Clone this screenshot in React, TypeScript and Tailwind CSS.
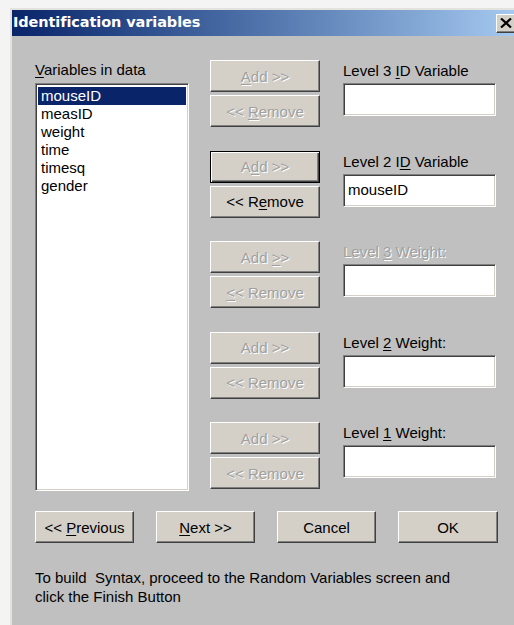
import React from "react";

type BtnProps = {
  children: React.ReactNode;
  disabled?: boolean;
  primary?: boolean;
  className?: string;
};

// classic raised 3D push button
const Win98Button: React.FC<BtnProps> = ({ children, disabled, primary, className }) => {
  const frame = primary
    ? "border border-black shadow-[inset_1px_1px_0_#ffffff,inset_-1px_-1px_0_#404040,inset_-2px_-2px_0_#808080]"
    : "border border-t-white border-l-white border-r-[#404040] border-b-[#404040] shadow-[inset_-1px_-1px_0_#808080]";
  const text = disabled
    ? "text-[#a0a0a0] [text-shadow:1px_1px_0_#ffffff]"
    : "text-black";
  return (
    <div
      className={`flex items-center justify-center bg-[#d4d0c8] text-[15px] leading-[17px] select-none ${frame} ${text} ${className ?? ""}`}
    >
      <span className="whitespace-pre">{children}</span>
    </div>
  );
};

const Key: React.FC<{ children: React.ReactNode }> = ({ children }) => (
  <span className="underline underline-offset-[2px] decoration-1">{children}</span>
);

// sunken white edit field
const sunken =
  "bg-white border border-t-[#808080] border-l-[#808080] border-r-white border-b-white shadow-[inset_1px_1px_0_#404040,inset_-1px_-1px_0_#d4d0c8]";

type Slot = {
  label: React.ReactNode;
  labelDisabled?: boolean;
  value?: string;
  add: React.ReactNode;
  remove: React.ReactNode;
  addPrimary?: boolean;
  removeEnabled?: boolean;
};

const slots: Slot[] = [
  {
    label: (
      <>
        Level 3 <Key>I</Key>D Variable
      </>
    ),
    add: (
      <>
        <Key>A</Key>dd &gt;&gt;
      </>
    ),
    remove: (
      <>
        &lt;&lt; <Key>R</Key>emove
      </>
    ),
  },
  {
    label: (
      <>
        Level 2 I<Key>D</Key> Variable
      </>
    ),
    value: "mouseID",
    add: (
      <>
        A<Key>d</Key>d &gt;&gt;
      </>
    ),
    remove: (
      <>
        &lt;&lt; R<Key>e</Key>move
      </>
    ),
    addPrimary: true,
    removeEnabled: true,
  },
  {
    label: (
      <>
        Level <Key>3</Key> Weight:
      </>
    ),
    labelDisabled: true,
    add: (
      <>
        Add <Key>&gt;</Key>&gt;
      </>
    ),
    remove: (
      <>
        <Key>&lt;</Key>&lt; Remove
      </>
    ),
  },
  {
    label: (
      <>
        Level <Key>2</Key> Weight:
      </>
    ),
    add: <>Add &gt;&gt;</>,
    remove: <>&lt;&lt; Remove</>,
  },
  {
    label: (
      <>
        Level <Key>1</Key> Weight:
      </>
    ),
    add: <>Add &gt;&gt;</>,
    remove: <>&lt;&lt; Remove</>,
  },
];

const variables = ["mouseID", "measID", "weight", "time", "timesq", "gender"];

export default function App() {
  return (
    <div
      className="w-[514px] h-[625px] overflow-hidden bg-[#f4f4f4] pt-[8px] pl-[10px]"
      style={{ fontFamily: '"Liberation Sans", Arial, sans-serif' }}
    >
      <div className="w-[508px] h-[620px] bg-[#c0c0c0] border-t-2 border-l-2 border-t-[#e4e2de] border-l-[#e4e2de]">
        {/* title bar */}
        <div className="h-[26px] flex items-center bg-gradient-to-r from-[#0a246a] to-[#a6caf0] pl-[1px]">
          <span
            className="text-white font-bold text-[14.5px] tracking-[-0.1px]"
            style={{ fontFamily: '"DejaVu Sans", Verdana, sans-serif' }}
          >
            Identification variables
          </span>
          <div className="ml-auto mr-[1px] w-[21px] h-[19px] flex items-center justify-center bg-[#d4d0c8] border border-t-white border-l-white border-r-[#404040] border-b-[#404040] shadow-[inset_-1px_-1px_0_#808080]">
            <svg width="12" height="10" viewBox="0 0 12 10" className="mr-[1px]">
              <path d="M1 0.5 L11 9.5 M11 0.5 L1 9.5" stroke="#000" strokeWidth="2.2" />
            </svg>
          </div>
        </div>

        {/* dialog body */}
        <div className="pt-[24px] pl-[23px] text-black">
          <div className="flex">
            <div className="w-[154px]">
              <div className="h-[17px] mt-[1px] text-[15px] leading-[17px]">
                <Key>V</Key>ariables in data
              </div>
              <div className={`mt-[5px] h-[408px] p-[2px] pt-[3px] ${sunken}`}>
                {variables.map((v, i) => (
                  <div
                    key={v}
                    className={`h-[18px] pl-[3px] text-[15px] leading-[18px] ${
                      i === 0 ? "bg-[#0a246a] text-white" : ""
                    }`}
                  >
                    {v}
                  </div>
                ))}
              </div>
            </div>

            <div className="ml-[21px] flex flex-col gap-[23.5px]">
              {slots.map((s, i) => (
                <div key={i} className="flex">
                  <div className="w-[110px] flex flex-col gap-[3px]">
                    <Win98Button className="h-[32px]" disabled primary={s.addPrimary}>
                      {s.add}
                    </Win98Button>
                    <Win98Button className="h-[32px]" disabled={!s.removeEnabled}>
                      {s.remove}
                    </Win98Button>
                  </div>
                  <div className="ml-[23px] w-[153px]">
                    <div
                      className={`mt-[2px] h-[17px] text-[15px] leading-[17px] whitespace-nowrap ${
                        s.labelDisabled ? "text-[#a0a0a0] [text-shadow:1px_1px_0_#ffffff]" : ""
                      }`}
                    >
                      {s.label}
                    </div>
                    <div className={`mt-[4px] h-[33px] px-[4px] pt-[6px] text-[15px] leading-[17px] ${sunken}`}>
                      {s.value}
                    </div>
                  </div>
                </div>
              ))}
            </div>
          </div>

          <div className="mt-[20px] flex gap-[22px]">
            <Win98Button className="w-[99px] h-[32px]">
              &lt;&lt; <Key>P</Key>revious
            </Win98Button>
            <Win98Button className="w-[99px] h-[32px]">
              <Key>N</Key>ext &gt;&gt;
            </Win98Button>
            <Win98Button className="w-[99px] h-[32px]">Cancel</Win98Button>
            <Win98Button className="w-[100px] h-[32px]">OK</Win98Button>
          </div>

          <p className="mt-[25px] text-[15px] leading-[19px] whitespace-pre">
            {"To build  Syntax, proceed to the Random Variables screen and\nclick the Finish Button"}
          </p>
        </div>
      </div>
    </div>
  );
}
